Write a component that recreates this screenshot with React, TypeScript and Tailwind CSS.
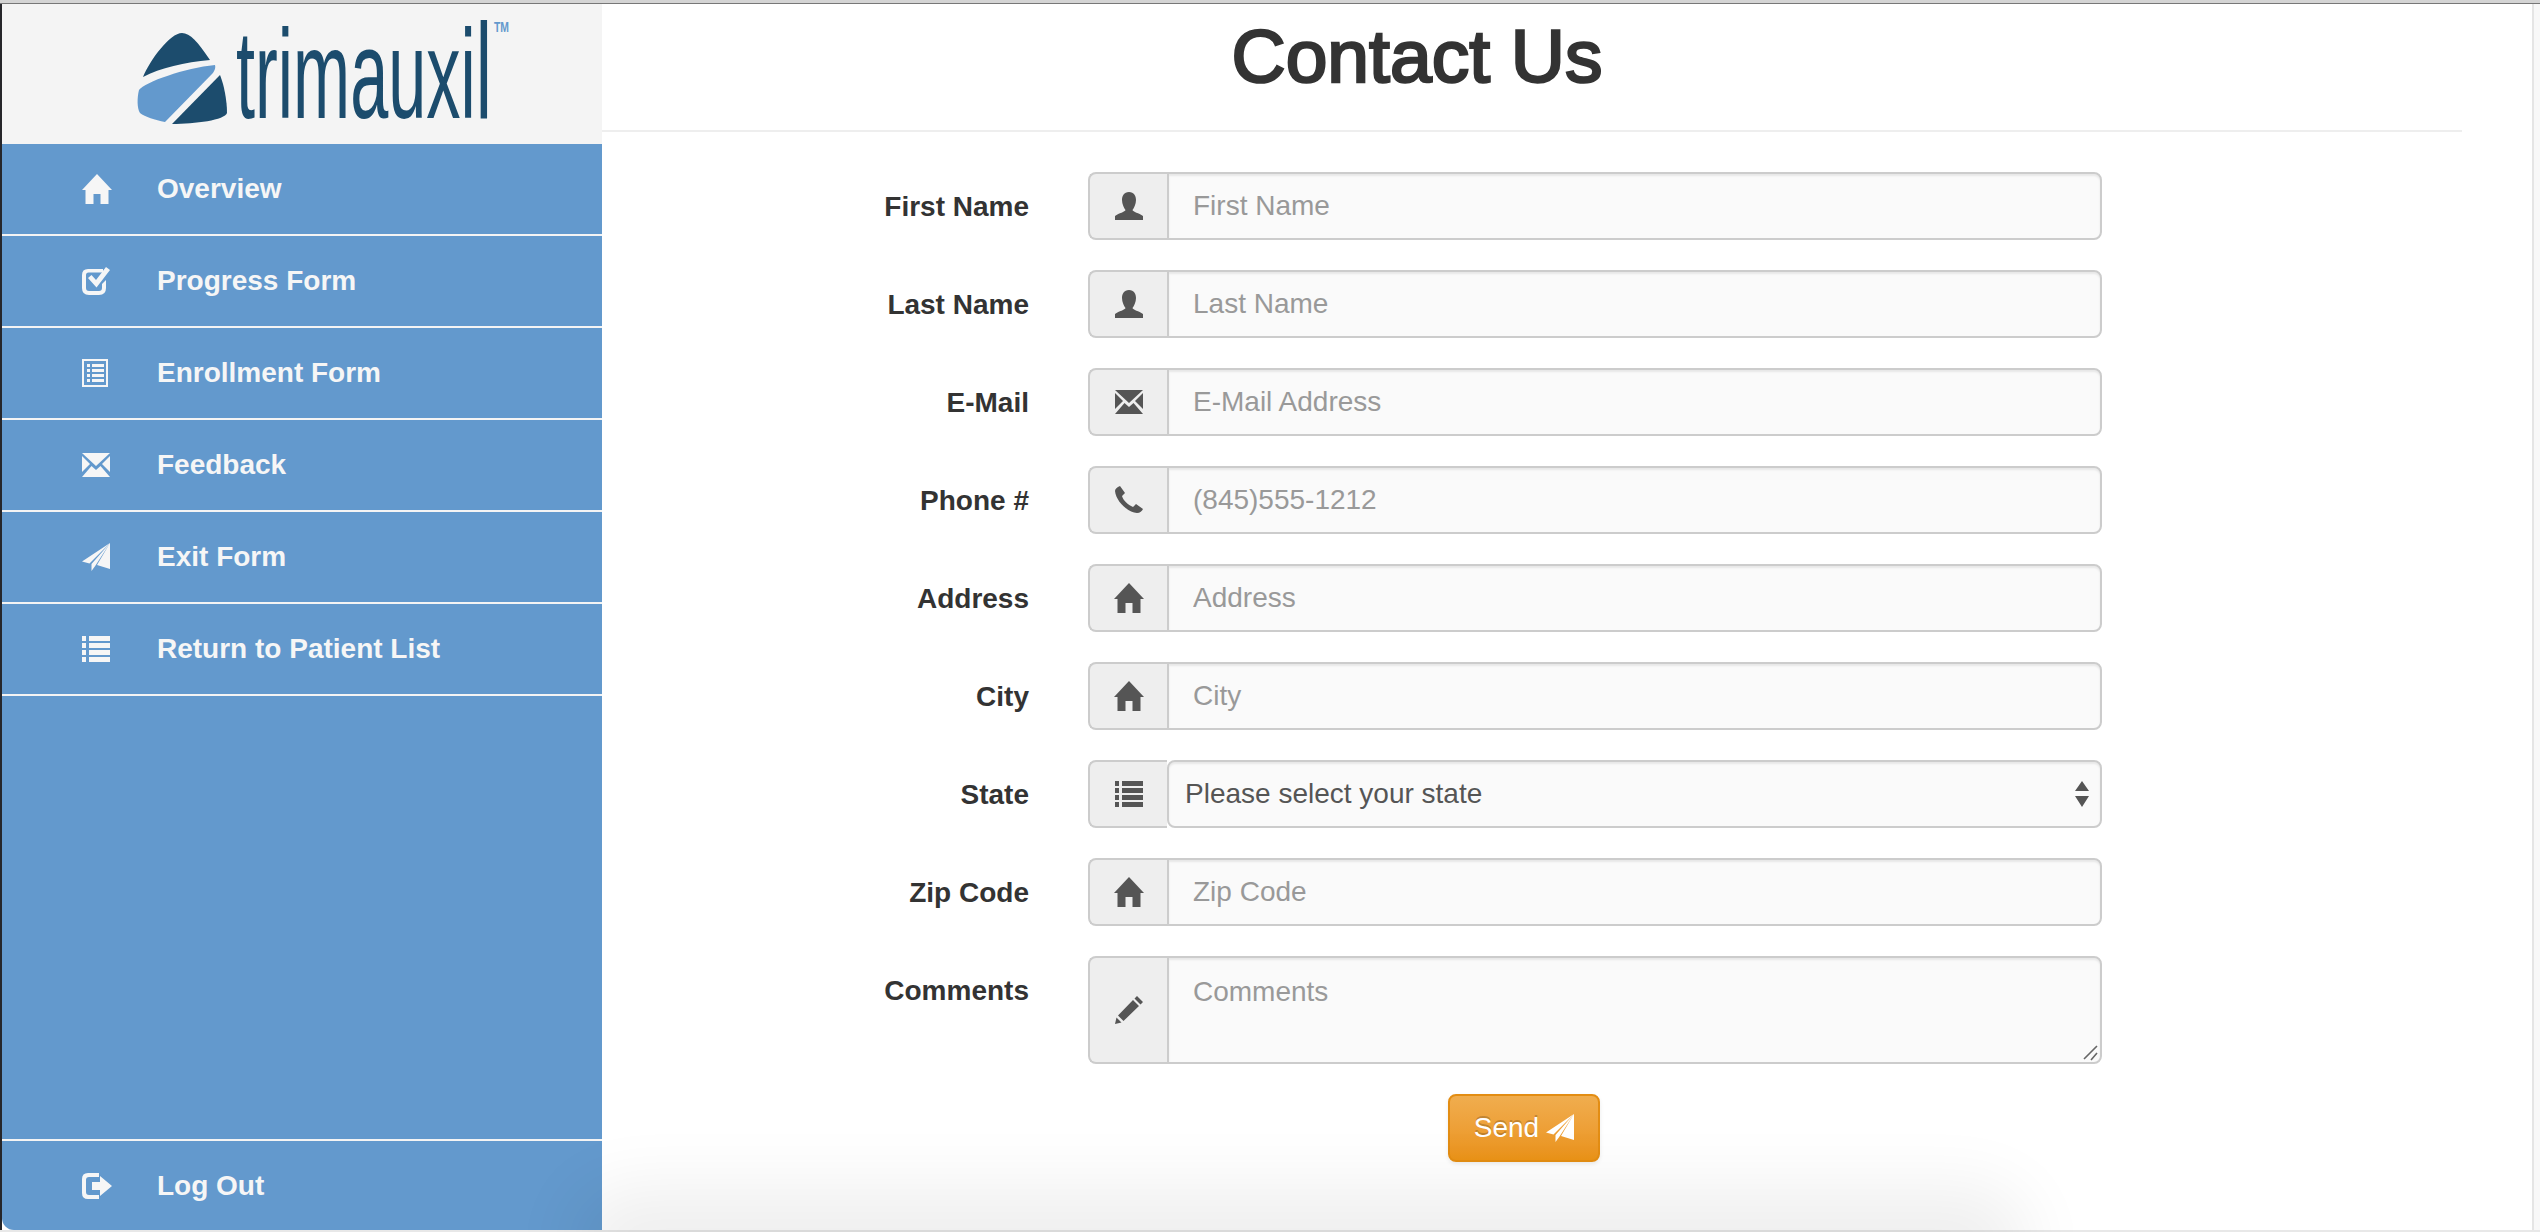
import type { ReactNode } from 'react'

const font = 'font-["Liberation_Sans",Arial,sans-serif]'

function Glyph({ w, h, box, children, className = '' }: { w: number; h: number; box: string; children: ReactNode; className?: string }) {
  return (
    <svg width={w} height={h} viewBox={box} fill="currentColor" className={`shrink-0 ${className}`}>
      {children}
    </svg>
  )
}

const HomeIcon = ({ s = 30 }: { s?: number }) => (
  <Glyph w={s} h={s} box="0 0 30 30">
    <path d="M15 0 L30 16 L26.5 16 L26.5 30 L18.5 30 L18.5 20 L11.5 20 L11.5 30 L3.5 30 L3.5 16 L0 16 Z" />
  </Glyph>
)

const CheckIcon = () => (
  <Glyph w={28} h={28} box="0 0 28 28">
    <path d="M6 2 H21 V5.5 H6.5 Q4 5.5 4 8 V21 Q4 24 7 24 H17 Q20 24 20 21 V17 L24 13 V21 Q24 28 17 28 H7 Q0 28 0 21 V8 Q0 2 6 2 Z" />
    <path d="M6 11 L9.5 8 L14 13 L24 0 L28 3 L14.5 20.5 Z" />
  </Glyph>
)

const ListAltIcon = () => (
  <Glyph w={26} h={28} box="0 0 26 28">
    <path fillRule="evenodd" d="M0 0 H26 V28 H0 Z M2 2 V26 H24 V2 Z" />
    <path d="M5 5 H8 V8 H5 Z M10 5 H22 V8 H10 Z M5 10 H8 V13 H5 Z M10 10 H22 V13 H10 Z M5 15 H8 V18 H5 Z M10 15 H22 V18 H10 Z M5 20 H8 V23 H5 Z M10 20 H22 V23 H10 Z" />
  </Glyph>
)

const MailIcon = () => (
  <Glyph w={28} h={24} box="0 0 28 24">
    <path d="M0 0 H28 L14 13 Z M0 3 L8 11 L0 19 Z M28 3 L20 11 L28 19 Z M0 24 L9.5 13 L14 17 L18.5 13 L28 24 Z" />
  </Glyph>
)

const PlaneIcon = ({ s = 28 }: { s?: number }) => (
  <Glyph w={s} h={s} box="0 0 28 28">
    <path d="M28 0 L0 18.5 L7.5 20.5 Z M28 0 L9.5 21 L9.5 28 L13.5 22.5 Z M28 0 L15 22 L28 26 Z" />
  </Glyph>
)

const ListIcon = ({ s = 28 }: { s?: number }) => (
  <Glyph w={s} h={s} box="0 0 28 28">
    <path d="M0 1 H4 V6 H0 Z M7 1 H28 V6 H7 Z M0 8 H4 V13 H0 Z M7 8 H28 V13 H7 Z M0 15 H4 V20 H0 Z M7 15 H28 V20 H7 Z M0 22 H4 V27 H0 Z M7 22 H28 V27 H7 Z" />
  </Glyph>
)

const LogOutIcon = () => (
  <Glyph w={30} h={26} box="0 0 30 26">
    <path d="M6 0 H17 V4 H7 Q4 4 4 7 V19 Q4 22 7 22 H17 V26 H6 Q0 26 0 20 V6 Q0 0 6 0 Z" />
    <path d="M10 9 H18 V3 L30 13 L18 23 V17 H10 Z" />
  </Glyph>
)

const UserIcon = () => (
  <Glyph w={28} h={28} box="0 0 28 28">
    <path d="M14 0 C19 0 21 4 21 8 C21 12 19 16 17.5 18 C18 20 24 21 28 24 V28 H0 V24 C4 21 10 20 10.5 18 C9 16 7 12 7 8 C7 4 9 0 14 0 Z" />
  </Glyph>
)

const PhoneIcon = () => (
  <Glyph w={28} h={28} box="0 0 28 28">
    <path d="M5 0 L10 7 L7 10 C8 14 13 19 18 21 L21 18 L28 23 C27 25 25 27 22 27 C12 26 1 15 0 5 C0 3 2 1 5 0 Z" />
  </Glyph>
)

const PencilIcon = () => (
  <Glyph w={28} h={28} box="0 0 28 28">
    <path d="M22 0 L28 6 L25.5 8.5 L19.5 2.5 Z M18 4 L24 10 L8.5 25 L3 19.5 Z M1.5 21.5 L6.5 26.5 L0 28 Z" />
  </Glyph>
)

function Logo() {
  return (
    <svg width={385} height={130} viewBox="130 4 385 130" className="shrink-0">
      <path fill="#1c4c6d" d="M182 33 C190 33 198 42 210 60 C185 62 160 68 143 77 C150 60 170 33 182 33 Z" />
      <path fill="#6399cd" d="M215 65 C216 68 214 72 212 74 L165 122 C155 120 145 117 140 113 C137 108 137 98 139 90 C145 82 185 68 215 65 Z" />
      <path fill="#1c4c6d" d="M220 75 C224 85 227 100 227 113 C225 120 195 124 172 124 Z" />
      <text x={236} y={118} fill="#1c4c6d" fontSize={127} textLength={256} lengthAdjust="spacingAndGlyphs" fontFamily="'Liberation Sans', Arial, sans-serif">
        trimauxi<tspan fontSize={135}>l</tspan>
      </text>
      <text x={494} y={32} fill="#6399cd" fontSize={14} fontWeight={700} textLength={15} lengthAdjust="spacingAndGlyphs" fontFamily="'Liberation Sans', Arial, sans-serif">
        TM
      </text>
    </svg>
  )
}

const navItems: { label: string; icon: ReactNode }[] = [
  { label: 'Overview', icon: <HomeIcon /> },
  { label: 'Progress Form', icon: <CheckIcon /> },
  { label: 'Enrollment Form', icon: <ListAltIcon /> },
  { label: 'Feedback', icon: <MailIcon /> },
  { label: 'Exit Form', icon: <PlaneIcon /> },
  { label: 'Return to Patient List', icon: <ListIcon /> },
]

function NavRow({ label, icon, last = false }: { label: string; icon: ReactNode; last?: boolean }) {
  return (
    <a className={`flex items-center pl-[80px] text-[28px] font-bold text-[#f6f6f6] ${last ? 'h-[89px]' : 'h-[92px] border-b-2 border-[#f4f4f4]'}`}>
      <span className="flex w-[75px] items-center">{icon}</span>
      {label}
    </a>
  )
}

const inputClass =
  'w-full bg-[#fafafa] text-[28px] text-[#555] placeholder:text-[#999] shadow-[inset_0_2px_2px_rgba(0,0,0,0.075)] outline-none'

function Row({ label, icon, tall, children }: { label: string; icon: ReactNode; tall?: boolean; children: ReactNode }) {
  return (
    <div className="mb-[30px] flex">
      <label className="flex h-[68px] w-[427px] items-center justify-end pt-[1px] text-[28px] font-bold text-[#333]">{label}</label>
      <div className={`ml-[59px] flex w-[1014px] ${tall ? 'h-[108px]' : 'h-[68px]'}`}>
        <span className="flex w-[79px] shrink-0 items-center justify-center rounded-l-[8px] border-2 border-r-0 border-[#ccc] bg-[#eee] text-[#555]">
          {icon}
        </span>
        {children}
      </div>
    </div>
  )
}

function TextRow({ label, placeholder, icon }: { label: string; placeholder: string; icon: ReactNode }) {
  return (
    <Row label={label} icon={icon}>
      <input
        placeholder={placeholder}
        className={`${inputClass} rounded-r-[8px] border-2 border-[#ccc] px-[24px]`}
      />
    </Row>
  )
}

export default function App() {
  return (
    <div className={`relative flex h-[1232px] w-[2540px] flex-col overflow-hidden bg-white ${font}`}>
      <div className="h-[4px] shrink-0 border-b border-[#777] bg-[#d4d4d4]" />
      <div className="flex min-h-0 flex-1">
        <div className="w-[2px] shrink-0 bg-[#26262a]" />
        <aside className="flex w-[600px] shrink-0 flex-col">
          <div className="flex h-[140px] shrink-0 items-start bg-[#f4f4f4] pl-[128px]">
            <Logo />
          </div>
          <nav className="flex flex-1 flex-col justify-between rounded-bl-[12px] bg-[#6399cd]">
            <div>
              {navItems.map((item) => (
                <NavRow key={item.label} label={item.label} icon={item.icon} />
              ))}
            </div>
            <div className="border-t-2 border-[#f4f4f4]">
              <NavRow label="Log Out" icon={<LogOutIcon />} last />
            </div>
          </nav>
        </aside>

        <main className="flex w-[1930px] shrink-0 flex-col">
          <div className="w-[1860px]">
            <h1 className="flex h-[128px] items-start justify-center border-b-2 border-[#eee] pt-[2px] pr-[230px] text-[75px] leading-[100px] text-[#333] [-webkit-text-stroke:2.5px_#333]">
              Contact Us
            </h1>
            <form className="pt-[40px]">
              <TextRow label="First Name" placeholder="First Name" icon={<UserIcon />} />
              <TextRow label="Last Name" placeholder="Last Name" icon={<UserIcon />} />
              <TextRow label="E-Mail" placeholder="E-Mail Address" icon={<MailIcon />} />
              <TextRow label="Phone #" placeholder="(845)555-1212" icon={<PhoneIcon />} />
              <TextRow label="Address" placeholder="Address" icon={<HomeIcon />} />
              <TextRow label="City" placeholder="City" icon={<HomeIcon />} />
              <Row label="State" icon={<ListIcon />}>
                <div className="relative w-full">
                  <select className={`${inputClass} h-full appearance-none rounded-[8px] border-2 border-[#ccc] px-[16px]`}>
                    <option>Please select your state</option>
                  </select>
                  <svg width={14} height={26} viewBox="0 0 14 26" fill="#555" className="pointer-events-none absolute top-[21px] right-[13px]">
                    <path d="M7 0 L14 10 H0 Z M0 15 H14 L7 26 Z" />
                  </svg>
                </div>
              </Row>
              <TextRow label="Zip Code" placeholder="Zip Code" icon={<HomeIcon />} />
              <Row label="Comments" icon={<PencilIcon />} tall>
                <div className="relative w-full">
                  <textarea
                    placeholder="Comments"
                    className={`${inputClass} h-full resize-none rounded-r-[8px] border-2 border-[#ccc] px-[24px] pt-[13px]`}
                  />
                  <svg width={16} height={16} viewBox="0 0 16 16" stroke="#666" strokeWidth={1.6} className="pointer-events-none absolute right-[3px] bottom-[3px]">
                    <path d="M1 14 L14 1 M8 15 L14 8" />
                  </svg>
                </div>
              </Row>
              <div className="mt-[2px] pl-[846px]">
                <button
                  type="button"
                  className="flex h-[68px] w-[152px] items-center justify-center gap-[7px] rounded-[8px] border-2 border-[#e38d13] bg-gradient-to-b from-[#f0ad4e] to-[#eb9316] text-[28px] text-white [text-shadow:0_-2px_0_rgba(0,0,0,0.2)] shadow-[0_2px_4px_rgba(0,0,0,0.08)]"
                >
                  Send
                  <PlaneIcon />
                </button>
              </div>
            </form>
          </div>
        </main>

        <div className="w-[2px] shrink-0 bg-[#e5e5e5]" />
        <div className="flex-1 bg-[#f8f8f8]" />
      </div>
      {/* shadow of the window behind the screenshot */}
      <div className="pointer-events-none absolute bottom-[-30px] left-[620px] h-[30px] w-[1361px] rounded-[40px] shadow-[0_0_70px_45px_rgba(0,0,0,0.065)]" />
      <div className="h-[2px] shrink-0 bg-[#e8e8e8]" />
    </div>
  )
}
